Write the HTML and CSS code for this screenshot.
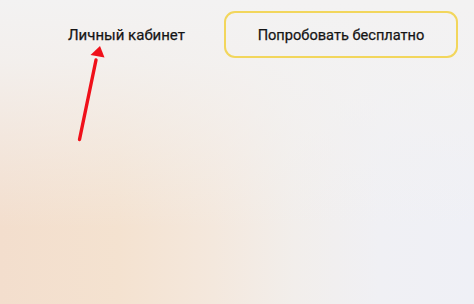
FILE: index.html
```html
<!DOCTYPE html>
<html lang="ru">
<head>
<meta charset="utf-8">
<link rel="stylesheet" href="styles.css">
</head>
<body>
<div class="page">
  <header class="header">
    <a class="cabinet" href="#">Личный кабинет</a>
    <a class="try-btn" href="#">Попробовать бесплатно</a>
  </header>
  <svg class="arrow" width="474" height="304" viewBox="0 0 474 304">
    <line x1="79.5" y1="139.5" x2="96" y2="60" stroke="#f0101a" stroke-width="3.4" stroke-linecap="round"/>
    <polygon points="100,46 104.5,57.5 90.5,55" fill="#f0101a"/>
  </svg>
</div>
</body>
</html>
```
FILE: styles.css
```css
html, body {
  margin: 0;
  padding: 0;
}
body {
  width: 474px;
  height: 304px;
  overflow: hidden;
  font-family: Roboto, "Noto Sans", sans-serif;
}
.page {
  position: relative;
  width: 474px;
  height: 304px;
  background:
    linear-gradient(180deg, rgba(243, 242, 242, 1) 0%, rgba(243, 242, 242, 0.85) 20%, rgba(243, 242, 242, 0.3) 55%, rgba(243, 242, 242, 0) 75%),
    linear-gradient(90deg, #f3decd 0%, #f4e2d0 25%, #f4e8dd 45%, #f2eeeb 62%, #f0f0f4 80%, #eff0f6 100%);
}
.header {
  display: flex;
  align-items: center;
  padding: 11px 16px 0 68px;
  gap: 11px;
}
.cabinet {
  color: #151515;
  text-decoration: none;
  font-size: 15px;
  flex: 1;
  -webkit-text-stroke: 0.25px #151515;
}
.try-btn {
  box-sizing: border-box;
  width: 234px;
  height: 47px;
  border: 2px solid #f2d65c;
  border-radius: 11px;
  display: flex;
  align-items: center;
  justify-content: center;
  color: #151515;
  text-decoration: none;
  font-size: 14.6px;
  background: transparent;
  -webkit-text-stroke: 0.25px #151515;
}
.arrow {
  position: absolute;
  left: 0;
  top: 0;
}
```
